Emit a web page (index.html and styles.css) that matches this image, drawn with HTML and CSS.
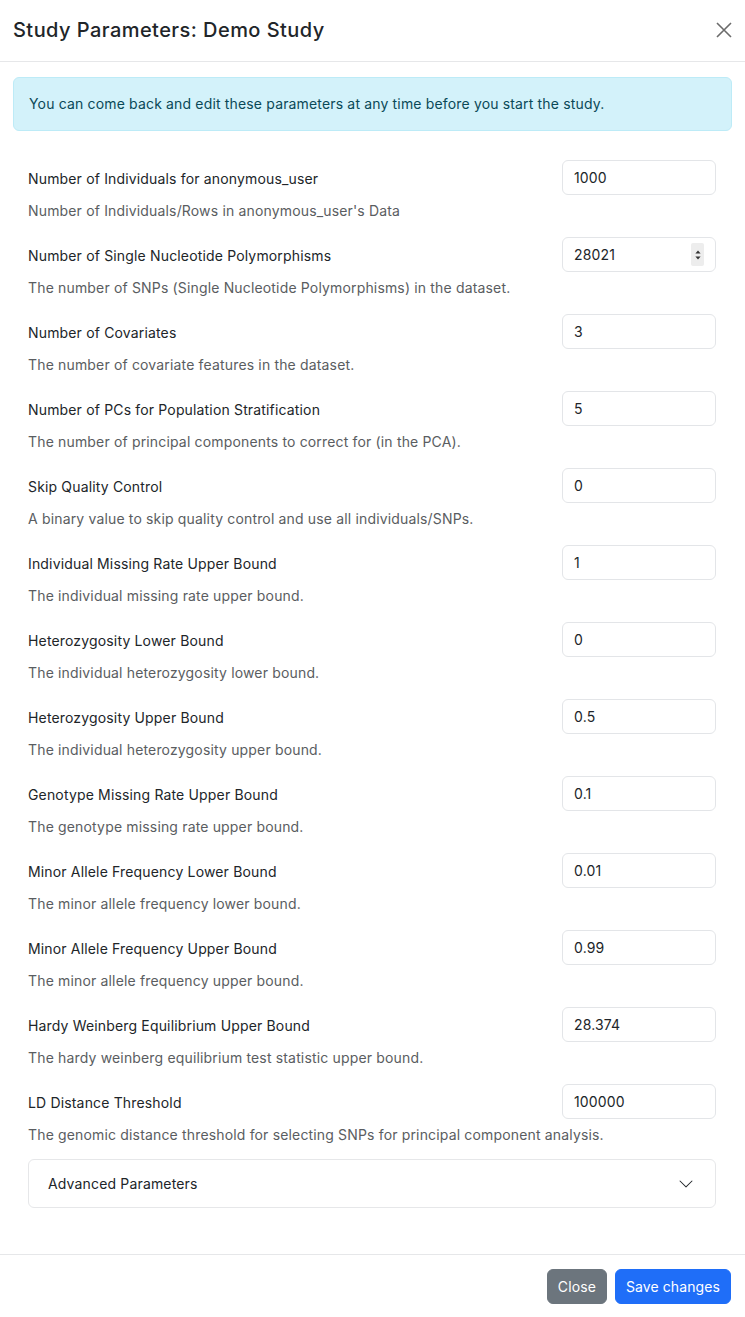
FILE: index.html
```html
<!DOCTYPE html>
<html lang="en">
<head>
<meta charset="utf-8">
<title>Study Parameters: Demo Study</title>
<link rel="stylesheet" href="styles.css">
</head>
<body>
<div class="modal">
  <div class="modal-header">
    <h5 class="modal-title">Study Parameters: Demo Study</h5>
    <button class="btn-close" aria-label="Close">
      <svg width="16" height="16" viewBox="0 0 16 16"><path d="M1 1L15 15M15 1L1 15" stroke="#6b6b6b" stroke-width="1.6" fill="none"/></svg>
    </button>
  </div>
  <div class="modal-body">
    <div class="alert">You can come back and edit these parameters at any time before you start the study.</div>
    <form class="params">
      <div class="field">
        <div class="field-top"><label>Number of Individuals for anonymous_user</label><input class="input" value="1000"></div>
        <div class="help">Number of Individuals/Rows in anonymous_user's Data</div>
      </div>
      <div class="field">
        <div class="field-top"><label>Number of Single Nucleotide Polymorphisms</label>
          <div class="num-wrap"><input class="input" value="28021"><span class="spinner"><svg width="8" height="14" viewBox="0 0 8 14"><path d="M4 2.5L6.6 5.5H1.4Z" fill="#333"/><path d="M4 11.5L6.6 8.5H1.4Z" fill="#333"/></svg></span></div>
        </div>
        <div class="help">The number of SNPs (Single Nucleotide Polymorphisms) in the dataset.</div>
      </div>
      <div class="field">
        <div class="field-top"><label>Number of Covariates</label><input class="input" value="3"></div>
        <div class="help">The number of covariate features in the dataset.</div>
      </div>
      <div class="field">
        <div class="field-top"><label>Number of PCs for Population Stratification</label><input class="input" value="5"></div>
        <div class="help">The number of principal components to correct for (in the PCA).</div>
      </div>
      <div class="field">
        <div class="field-top"><label>Skip Quality Control</label><input class="input" value="0"></div>
        <div class="help">A binary value to skip quality control and use all individuals/SNPs.</div>
      </div>
      <div class="field">
        <div class="field-top"><label>Individual Missing Rate Upper Bound</label><input class="input" value="1"></div>
        <div class="help">The individual missing rate upper bound.</div>
      </div>
      <div class="field">
        <div class="field-top"><label>Heterozygosity Lower Bound</label><input class="input" value="0"></div>
        <div class="help">The individual heterozygosity lower bound.</div>
      </div>
      <div class="field">
        <div class="field-top"><label>Heterozygosity Upper Bound</label><input class="input" value="0.5"></div>
        <div class="help">The individual heterozygosity upper bound.</div>
      </div>
      <div class="field">
        <div class="field-top"><label>Genotype Missing Rate Upper Bound</label><input class="input" value="0.1"></div>
        <div class="help">The genotype missing rate upper bound.</div>
      </div>
      <div class="field">
        <div class="field-top"><label>Minor Allele Frequency Lower Bound</label><input class="input" value="0.01"></div>
        <div class="help">The minor allele frequency lower bound.</div>
      </div>
      <div class="field">
        <div class="field-top"><label>Minor Allele Frequency Upper Bound</label><input class="input" value="0.99"></div>
        <div class="help">The minor allele frequency upper bound.</div>
      </div>
      <div class="field">
        <div class="field-top"><label>Hardy Weinberg Equilibrium Upper Bound</label><input class="input" value="28.374"></div>
        <div class="help">The hardy weinberg equilibrium test statistic upper bound.</div>
      </div>
      <div class="field">
        <div class="field-top"><label>LD Distance Threshold</label><input class="input" value="100000"></div>
        <div class="help">The genomic distance threshold for selecting SNPs for principal component analysis.</div>
      </div>
      <div class="accordion">
        <span>Advanced Parameters</span>
        <svg width="16" height="16" viewBox="0 0 16 16"><path d="M1.646 4.646a.5.5 0 0 1 .708 0L8 10.293l5.646-5.647a.5.5 0 0 1 .708.708l-6 6a.5.5 0 0 1-.708 0l-6-6a.5.5 0 0 1 0-.708z" fill="#212529"/></svg>
      </div>
    </form>
  </div>
  <div class="modal-footer">
    <button class="btn btn-secondary">Close</button>
    <button class="btn btn-primary">Save changes</button>
  </div>
</div>
</body>
</html>
```
FILE: styles.css
```css
* { box-sizing: border-box; }
html, body { margin: 0; padding: 0; background: #fff; }
body {
  font-family: Inter, "Noto Sans", "Liberation Sans", sans-serif;
  font-size: 14px;
  letter-spacing: 0.16px;
  color: #212529;
}
.modal { width: 745px; min-height: 1317px; display: flex; flex-direction: column; }
.modal-header {
  display: flex;
  justify-content: space-between;
  align-items: center;
  padding: 15px 13px 16px 13px;
  border-bottom: 1px solid #e6e7e9;
}
.modal-title {
  margin: 0;
  font-size: 20px;
  line-height: 30px;
  font-weight: 500;
  letter-spacing: 0.45px;
}
.btn-close {
  border: 0;
  background: none;
  padding: 0;
  width: 16px;
  height: 16px;
  display: flex;
  cursor: pointer;
}
.modal-body { padding: 15px 13px 46px 13px; flex: 1; }
.alert {
  background: #d3f2fa;
  border: 1px solid #bdebf7;
  border-radius: 6px;
  color: #0a4957;
  padding: 15px 15px;
  line-height: 22px;
}
.params {
  padding: 29px 16px 0 15px;
  display: flex;
  flex-direction: column;
  gap: 16px;
}
.field-top {
  display: flex;
  justify-content: space-between;
  align-items: center;
  height: 35px;
}
.field-top label { line-height: 21px; padding-top: 1px; }
.input {
  width: 154px;
  height: 35px;
  border: 1px solid #e3e5e8;
  border-radius: 6px;
  padding: 0 11px;
  font: inherit;
  font-size: 14px;
  letter-spacing: 0.16px;
  color: #212529;
  background: #fff;
  outline: none;
}
.num-wrap { position: relative; width: 154px; height: 35px; }
.spinner {
  position: absolute;
  right: 12px;
  top: 6px;
  width: 13px;
  height: 23px;
  background: #ededed;
  border-radius: 2px;
  display: flex;
  align-items: center;
  justify-content: center;
}
.help {
  margin-top: 5px;
  line-height: 21px;
  color: #5a5d61;
}
.accordion {
  margin-top: -2px;
  height: 49px;
  border: 1px solid #e6e7e9;
  border-radius: 6px;
  display: flex;
  align-items: center;
  justify-content: space-between;
  padding: 0 21px 0 19px;
}
.modal-footer {
  display: flex;
  justify-content: flex-end;
  gap: 8px;
  padding: 14px 14px 13px 14px;
  border-top: 1px solid #e6e7e9;
}
.btn {
  height: 35px;
  padding: 0 10px;
  border-radius: 6px;
  border: 1px solid transparent;
  font-family: inherit;
  font-size: 14px;
  letter-spacing: 0.1px;
  color: #fff;
  cursor: pointer;
}
.btn-secondary { background: #6c757d; border-color: #6c757d; }
.btn-primary { background: #1f6ef8; border-color: #1f6ef8; }
```
